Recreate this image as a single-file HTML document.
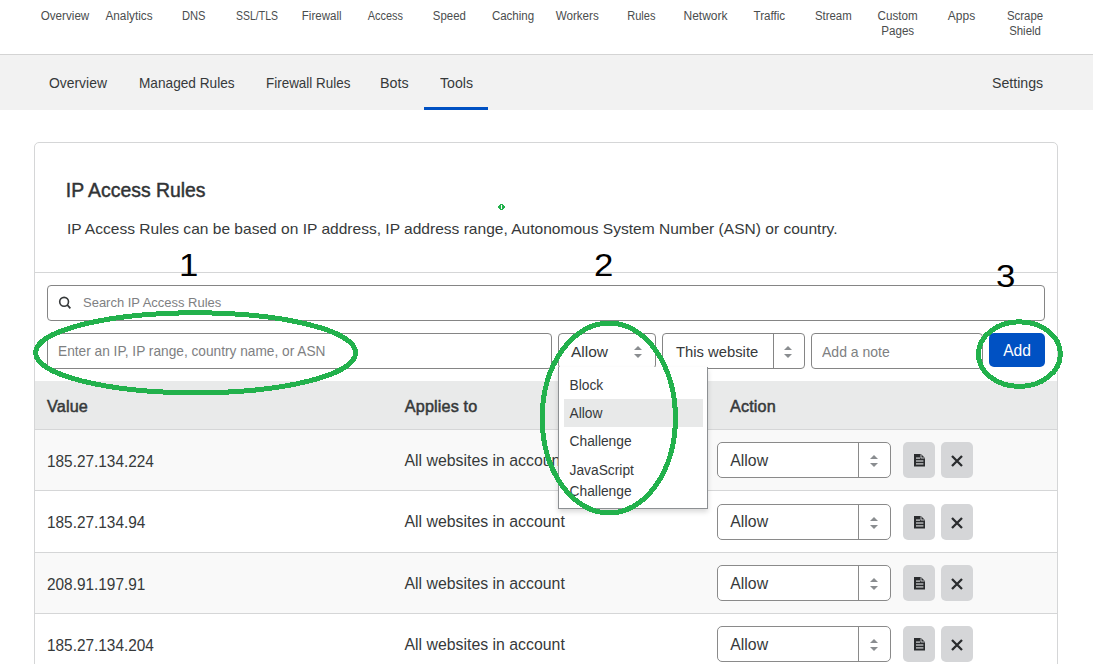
<!DOCTYPE html>
<html><head><meta charset="utf-8">
<style>
*{box-sizing:border-box;margin:0;padding:0}
html,body{width:1093px;height:664px;overflow:hidden;background:#fff;font-family:"Liberation Sans",sans-serif;color:#36393a}
.a{position:absolute;white-space:nowrap}
.nav{position:absolute;top:9px;width:64px;text-align:center;font-size:12px;line-height:15px;color:#4a4d4e}
.sub{position:absolute;top:0;font-size:14px;line-height:20px;color:#36393a}
.inp{position:absolute;border:1px solid #858585;border-radius:4px;background:#fff}
.ph{position:absolute;font-size:13.5px;line-height:16px;color:#7e8082;white-space:nowrap}
.th{position:absolute;font-size:16.2px;letter-spacing:0.15px;font-weight:400;line-height:18px;color:#36393a;-webkit-text-stroke:0.5px #36393a;white-space:nowrap}
.td{position:absolute;font-size:15px;line-height:18px;color:#36393a;white-space:nowrap}
.row{position:absolute;left:35px;width:1022px;border-bottom:1px solid #d5d6d7}
.sel{position:absolute;left:717px;width:174px;height:36px;border:1px solid #8a8a8a;border-radius:5px;background:#fff}
.sel .dv{position:absolute;left:140px;top:0;bottom:0;border-left:1px solid #8a8a8a}
.btn{position:absolute;width:32px;height:36px;border-radius:5px;background:#d5d6d8}
.num{position:absolute;font-size:29px;line-height:30px;color:#000;transform:scale(1.2,1.05);transform-origin:0 0}
</style></head><body>
<!-- top nav -->
<div class="nav" style="left:33.5px"><span style="display:inline-block;transform:scaleX(0.97)">Overview</span></div>
<div class="nav" style="left:97.5px"><span style="display:inline-block;transform:scaleX(0.98)">Analytics</span></div>
<div class="nav" style="left:161.5px"><span style="display:inline-block;transform:scaleX(0.93)">DNS</span></div>
<div class="nav" style="left:225.5px"><span style="display:inline-block;transform:scaleX(0.87)">SSL/TLS</span></div>
<div class="nav" style="left:289.5px"><span style="display:inline-block;transform:scaleX(0.96)">Firewall</span></div>
<div class="nav" style="left:353.5px"><span style="display:inline-block;transform:scaleX(0.91)">Access</span></div>
<div class="nav" style="left:417.5px"><span style="display:inline-block;transform:scaleX(0.95)">Speed</span></div>
<div class="nav" style="left:481.5px"><span style="display:inline-block;transform:scaleX(0.96)">Caching</span></div>
<div class="nav" style="left:545.5px"><span style="display:inline-block;transform:scaleX(0.97)">Workers</span></div>
<div class="nav" style="left:609.5px"><span style="display:inline-block;transform:scaleX(0.92)">Rules</span></div>
<div class="nav" style="left:673.5px"><span style="display:inline-block;transform:scaleX(1.0)">Network</span></div>
<div class="nav" style="left:737.5px"><span style="display:inline-block;transform:scaleX(0.97)">Traffic</span></div>
<div class="nav" style="left:801.5px"><span style="display:inline-block;transform:scaleX(0.95)">Stream</span></div>
<div class="nav" style="left:865.5px"><span style="display:inline-block;transform:scaleX(0.97)">Custom<br>Pages</span></div>
<div class="nav" style="left:929.5px"><span style="display:inline-block;transform:scaleX(1.0)">Apps</span></div>
<div class="nav" style="left:993.5px"><span style="display:inline-block;transform:scaleX(0.95)">Scrape<br>Shield</span></div>

<!-- subnav -->
<div class="a" style="left:0;top:54px;width:1093px;height:1px;background:#d4d4d4"></div>
<div class="a" style="left:0;top:55px;width:1093px;height:55px;background:#f2f2f2">
  <div class="sub" style="left:49px;top:18px;font-size:14.3px;transform:scaleX(0.972);transform-origin:0 0">Overview</div>
  <div class="sub" style="left:138.5px;top:18px;font-size:14.3px;transform:scaleX(0.955);transform-origin:0 0">Managed Rules</div>
  <div class="sub" style="left:265.5px;top:18px;font-size:14.3px;transform:scaleX(0.94);transform-origin:0 0">Firewall Rules</div>
  <div class="sub" style="left:380px;top:18px;font-size:14.3px;transform:scaleX(1);transform-origin:0 0">Bots</div>
  <div class="sub" style="left:439.5px;top:18px;font-size:14.3px;transform:scaleX(0.99);transform-origin:0 0">Tools</div>
  <div class="sub" style="left:991.5px;top:18px;font-size:14.3px;transform:scaleX(0.99);transform-origin:0 0">Settings</div>
  <div class="a" style="left:424px;top:52px;width:64px;height:3px;background:#0051c3"></div>
</div>

<!-- card -->
<div class="a" style="left:34px;top:142px;width:1024px;height:600px;border:1px solid #d5d6d7;border-radius:5px;background:#fff"></div>
<div class="a" style="left:65.8px;top:178.5px;font-size:19.4px;font-weight:400;line-height:22px;color:#313436;-webkit-text-stroke:0.45px #313436;transform:scaleX(1.0);transform-origin:0 0">IP Access Rules</div>
<div class="a" style="left:67px;top:219px;font-size:15.55px;line-height:20px;color:#36393a">IP Access Rules can be based on IP address, IP address range, Autonomous System Number (ASN) or country.</div>
<div class="a" style="left:35px;top:272px;width:1022px;height:1px;background:#d5d6d7"></div>

<!-- search -->
<div class="inp" style="left:47px;top:285px;width:998px;height:36px"></div>
<svg class="a" style="left:57px;top:295px" width="16" height="16" viewBox="0 0 16 16"><circle cx="7.1" cy="6.8" r="4.4" fill="none" stroke="#36393a" stroke-width="1.6"/><line x1="10.2" y1="9.9" x2="13.4" y2="13.3" stroke="#36393a" stroke-width="1.7"/></svg>
<div class="ph" style="left:82.5px;top:295px;font-size:13.6px;transform:scaleX(0.955);transform-origin:0 0">Search IP Access Rules</div>

<!-- input row -->
<div class="inp" style="left:47px;top:333px;width:505px;height:36px"></div>
<div class="ph" style="left:58px;top:343.3px;font-size:14.3px;transform:scaleX(0.958);transform-origin:0 0">Enter an IP, IP range, country name, or ASN</div>
<div class="inp" style="left:558px;top:333px;width:98px;height:36px"></div>
<div class="td" style="left:571px;top:343px;font-size:15.5px">Allow</div>
<div class="inp" style="left:662px;top:333px;width:143px;height:36px"><div class="a" style="left:109.5px;top:0;height:34px;border-left:1px solid #858585"></div></div>
<div class="td" style="left:676px;top:343.3px;font-size:14.8px">This website</div>
<div class="inp" style="left:811px;top:333px;width:172px;height:36px"></div>
<div class="ph" style="left:822px;top:343.5px;font-size:14.3px;transform:scaleX(0.98);transform-origin:0 0">Add a note</div>
<div class="a" style="left:989px;top:333px;width:56px;height:34px;border-radius:5px;background:#0051c3;color:#fff;font-size:15.6px;line-height:36px;text-align:center">Add</div>

<!-- table -->
<div class="row" style="top:381px;height:49px;background:#e9eaea"></div>
<div class="th" style="left:47px;top:397px">Value</div>
<div class="th" style="left:404.8px;top:397px">Applies to</div>
<div class="th" style="left:730px;top:397px">Action</div>

<div class="row" style="top:430px;height:61px;background:#f9f9f9"></div>
<div class="row" style="top:491px;height:62px;background:#fff"></div>
<div class="row" style="top:553px;height:61px;background:#f9f9f9"></div>
<div class="row" style="top:614px;height:62px;background:#fff"></div>
<div class="td" style="left:46.5px;top:452.5px;font-size:15.7px;transform:scaleX(0.98);transform-origin:0 0">185.27.134.224</div>
<div class="td" style="left:404.5px;top:452.2px;font-size:15.85px">All websites in account</div>
<div class="sel" style="top:442px"><div class="dv"></div></div>
<div class="td" style="left:730.3px;top:452.0px;font-size:15.8px">Allow</div>
<svg class="a" style="left:870px;top:454.5px" width="8" height="13" viewBox="0 0 8 13"><path d="M0 4L4 0L8 4Z M0 8H8L4 12Z" fill="#8a8d90"/></svg>
<div class="btn" style="left:903px;top:442px"><svg style="position:absolute;left:11px;top:11.5px" width="11" height="13" viewBox="0 0 11 13"><path d="M0 0H7L11 4V12.5H0Z" fill="#2a2c2e"/><path d="M7 0.3V4H10.7" fill="none" stroke="#d5d6d8" stroke-width="0.9"/><rect x="2" y="3.5" width="4.2" height="1.2" fill="#d5d6d8"/><rect x="2" y="6.4" width="7.4" height="1.2" fill="#d5d6d8"/><rect x="2" y="9.3" width="7.4" height="1.2" fill="#d5d6d8"/></svg></div>
<div class="btn" style="left:941px;top:442px"><svg style="position:absolute;left:10px;top:12.5px" width="12" height="12" viewBox="0 0 12 12"><path d="M1 1L11 11M11 1L1 11" stroke="#2a2c2e" stroke-width="2.3"/></svg></div>
<div class="td" style="left:46.5px;top:513.5px;font-size:15.7px;transform:scaleX(0.98);transform-origin:0 0">185.27.134.94</div>
<div class="td" style="left:404.5px;top:513.2px;font-size:15.85px">All websites in account</div>
<div class="sel" style="top:504px"><div class="dv"></div></div>
<div class="td" style="left:730.3px;top:513.0px;font-size:15.8px">Allow</div>
<svg class="a" style="left:870px;top:516.5px" width="8" height="13" viewBox="0 0 8 13"><path d="M0 4L4 0L8 4Z M0 8H8L4 12Z" fill="#8a8d90"/></svg>
<div class="btn" style="left:903px;top:504px"><svg style="position:absolute;left:11px;top:11.5px" width="11" height="13" viewBox="0 0 11 13"><path d="M0 0H7L11 4V12.5H0Z" fill="#2a2c2e"/><path d="M7 0.3V4H10.7" fill="none" stroke="#d5d6d8" stroke-width="0.9"/><rect x="2" y="3.5" width="4.2" height="1.2" fill="#d5d6d8"/><rect x="2" y="6.4" width="7.4" height="1.2" fill="#d5d6d8"/><rect x="2" y="9.3" width="7.4" height="1.2" fill="#d5d6d8"/></svg></div>
<div class="btn" style="left:941px;top:504px"><svg style="position:absolute;left:10px;top:12.5px" width="12" height="12" viewBox="0 0 12 12"><path d="M1 1L11 11M11 1L1 11" stroke="#2a2c2e" stroke-width="2.3"/></svg></div>
<div class="td" style="left:46.5px;top:575.5px;font-size:15.7px;transform:scaleX(0.98);transform-origin:0 0">208.91.197.91</div>
<div class="td" style="left:404.5px;top:575.2px;font-size:15.85px">All websites in account</div>
<div class="sel" style="top:565px"><div class="dv"></div></div>
<div class="td" style="left:730.3px;top:575.0px;font-size:15.8px">Allow</div>
<svg class="a" style="left:870px;top:577.5px" width="8" height="13" viewBox="0 0 8 13"><path d="M0 4L4 0L8 4Z M0 8H8L4 12Z" fill="#8a8d90"/></svg>
<div class="btn" style="left:903px;top:565px"><svg style="position:absolute;left:11px;top:11.5px" width="11" height="13" viewBox="0 0 11 13"><path d="M0 0H7L11 4V12.5H0Z" fill="#2a2c2e"/><path d="M7 0.3V4H10.7" fill="none" stroke="#d5d6d8" stroke-width="0.9"/><rect x="2" y="3.5" width="4.2" height="1.2" fill="#d5d6d8"/><rect x="2" y="6.4" width="7.4" height="1.2" fill="#d5d6d8"/><rect x="2" y="9.3" width="7.4" height="1.2" fill="#d5d6d8"/></svg></div>
<div class="btn" style="left:941px;top:565px"><svg style="position:absolute;left:10px;top:12.5px" width="12" height="12" viewBox="0 0 12 12"><path d="M1 1L11 11M11 1L1 11" stroke="#2a2c2e" stroke-width="2.3"/></svg></div>
<div class="td" style="left:46.5px;top:636.5px;font-size:15.7px;transform:scaleX(0.98);transform-origin:0 0">185.27.134.204</div>
<div class="td" style="left:404.5px;top:636.2px;font-size:15.85px">All websites in account</div>
<div class="sel" style="top:626px"><div class="dv"></div></div>
<div class="td" style="left:730.3px;top:636.0px;font-size:15.8px">Allow</div>
<svg class="a" style="left:870px;top:638.5px" width="8" height="13" viewBox="0 0 8 13"><path d="M0 4L4 0L8 4Z M0 8H8L4 12Z" fill="#8a8d90"/></svg>
<div class="btn" style="left:903px;top:626px"><svg style="position:absolute;left:11px;top:11.5px" width="11" height="13" viewBox="0 0 11 13"><path d="M0 0H7L11 4V12.5H0Z" fill="#2a2c2e"/><path d="M7 0.3V4H10.7" fill="none" stroke="#d5d6d8" stroke-width="0.9"/><rect x="2" y="3.5" width="4.2" height="1.2" fill="#d5d6d8"/><rect x="2" y="6.4" width="7.4" height="1.2" fill="#d5d6d8"/><rect x="2" y="9.3" width="7.4" height="1.2" fill="#d5d6d8"/></svg></div>
<div class="btn" style="left:941px;top:626px"><svg style="position:absolute;left:10px;top:12.5px" width="12" height="12" viewBox="0 0 12 12"><path d="M1 1L11 11M11 1L1 11" stroke="#2a2c2e" stroke-width="2.3"/></svg></div>

<!-- select arrows -->
<svg class="a" style="left:634px;top:346px" width="8" height="13" viewBox="0 0 8 13"><path d="M0 4L4 0L8 4Z M0 8H8L4 12Z" fill="#8a8d90"/></svg>
<svg class="a" style="left:784px;top:346px" width="8" height="13" viewBox="0 0 8 13"><path d="M0 4L4 0L8 4Z M0 8H8L4 12Z" fill="#8a8d90"/></svg>

<!-- dropdown -->
<div class="a" style="left:558px;top:367px;width:150px;height:142px;background:#fff;border:1px solid #8d9093;border-top:none;box-shadow:0 3px 5px rgba(0,0,0,0.15)">
  <div class="a" style="left:5px;top:32px;width:139px;height:28px;background:#e8e9e9"></div>
  <div class="a" style="left:10.5px;top:10px;font-size:13.8px;line-height:18px;color:#36393a">Block</div>
  <div class="a" style="left:10.5px;top:38px;font-size:13.8px;line-height:18px;color:#36393a">Allow</div>
  <div class="a" style="left:10.5px;top:66px;font-size:13.8px;line-height:18px;color:#36393a">Challenge</div>
  <div class="a" style="left:10.5px;top:93px;font-size:13.8px;line-height:21px;color:#36393a;white-space:normal">JavaScript<br>Challenge</div>
</div>

<!-- annotations -->
<div class="num" style="left:179px;top:250px">1</div>
<div class="num" style="left:594px;top:250px">2</div>
<div class="num" style="left:996px;top:261px">3</div>

<svg class="a" style="left:0;top:0" width="1093" height="664" shape-rendering="crispEdges">
  <ellipse cx="195.6" cy="352.8" rx="160" ry="40" fill="none" stroke="#22b14c" stroke-width="5"/>
  <path d="M609.2 323 A66.2 95 0 0 1 609.2 513 A67 95 0 0 1 609.2 323Z" fill="none" stroke="#22b14c" stroke-width="5"/>
  <ellipse cx="1019.4" cy="354.1" rx="41" ry="32.3" fill="none" stroke="#22b14c" stroke-width="5"/>
  <path d="M500 204h3v1h1v1h1v2h-1v1h-1v1h-3v-1h-1v-1h-1v-2h1v-1h1z" fill="#22b14c"/><rect x="501" y="205" width="1" height="4" fill="#fff"/>
</svg>
</body></html>
